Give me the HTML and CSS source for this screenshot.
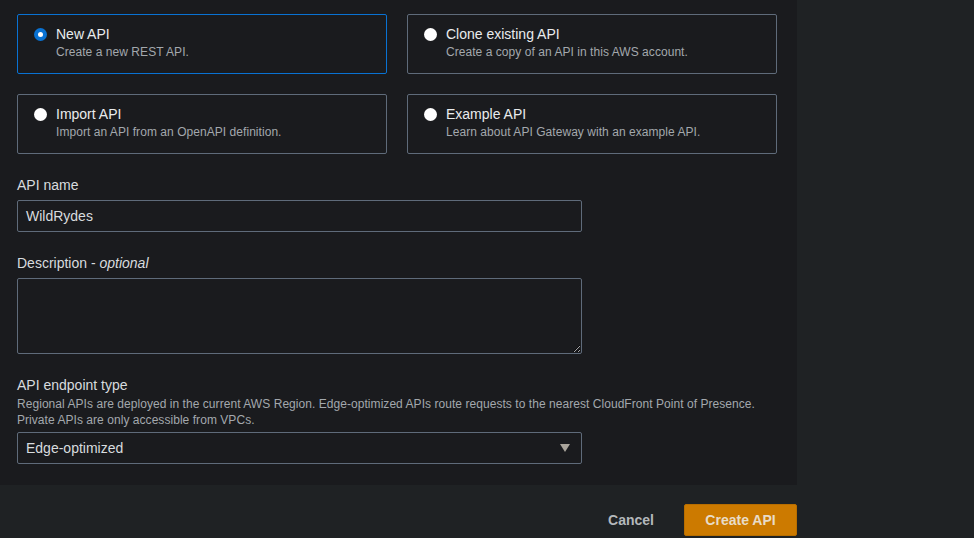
FILE: index.html
```html
<!DOCTYPE html>
<html lang="en">
<head>
<meta charset="utf-8">
<title>Create REST API</title>
<link rel="stylesheet" href="styles.css">
</head>
<body>
<main class="page">
  <section class="panel">
    <div class="tiles">
      <label class="tile tile-selected">
        <span class="radio radio-on"></span>
        <span class="tile-text">
          <span class="tile-title">New API</span>
          <span class="tile-desc">Create a new REST API.</span>
        </span>
      </label>
      <label class="tile">
        <span class="radio"></span>
        <span class="tile-text">
          <span class="tile-title">Clone existing API</span>
          <span class="tile-desc">Create a copy of an API in this AWS account.</span>
        </span>
      </label>
      <label class="tile">
        <span class="radio"></span>
        <span class="tile-text">
          <span class="tile-title">Import API</span>
          <span class="tile-desc">Import an API from an OpenAPI definition.</span>
        </span>
      </label>
      <label class="tile">
        <span class="radio"></span>
        <span class="tile-text">
          <span class="tile-title">Example API</span>
          <span class="tile-desc">Learn about API Gateway with an example API.</span>
        </span>
      </label>
    </div>

    <div class="field">
      <div class="field-label">API name</div>
      <div class="input">WildRydes</div>
    </div>

    <div class="field">
      <div class="field-label">Description - <em>optional</em></div>
      <textarea class="textarea"></textarea>
    </div>

    <div class="field">
      <div class="field-label">API endpoint type</div>
      <div class="field-desc">Regional APIs are deployed in the current AWS Region. Edge-optimized APIs route requests to the nearest CloudFront Point of Presence.<br>Private APIs are only accessible from VPCs.</div>
      <div class="select">
        <span>Edge-optimized</span>
        <svg class="caret" width="10" height="8" viewBox="0 0 10 8"><path d="M0 0 H10 L5 8 Z" fill="#a9a49b"/></svg>
      </div>
    </div>
  </section>

  <footer class="actions">
    <button class="btn-link">Cancel</button>
    <button class="btn-primary">Create API</button>
  </footer>
</main>
</body>
</html>
```

FILE: styles.css
```css
* { box-sizing: border-box; }

html, body {
  margin: 0;
  background: #1f2224;
  font-family: "Liberation Sans", Arial, sans-serif;
  color: #d5dbdb;
}

.page {
  width: 797px;
}

.panel {
  background: #1a1b1e;
  padding: 14px 17px 21px;
}

.tiles {
  display: grid;
  grid-template-columns: 370px 370px;
  grid-auto-rows: 60px;
  gap: 20px;
}

.tile {
  display: flex;
  align-items: flex-start;
  gap: 9px;
  border: 1px solid #5f6b7a;
  border-radius: 2px;
  padding: 13px 15px 0 16px;
}

.tile-selected {
  border-color: #0972d3;
}

.radio {
  flex: none;
  width: 13px;
  height: 13px;
  border-radius: 50%;
  background: #ffffff;
}

.radio-on {
  background: #0972d3;
  position: relative;
}

.radio-on::after {
  content: "";
  position: absolute;
  left: 4px;
  top: 4px;
  width: 5px;
  height: 5px;
  border-radius: 50%;
  background: #ffffff;
}

.tile-text {
  display: flex;
  flex-direction: column;
  margin-top: -4px;
}

.tile-title {
  font-size: 14px;
  line-height: 20px;
  color: #e9ebed;
}

.tile-desc {
  font-size: 12px;
  line-height: 16px;
  color: #a3a8ad;
  letter-spacing: 0.05px;
}

.field {
  margin-top: 21px;
}

.field-label {
  font-size: 14px;
  line-height: 20px;
  color: #d8dcdf;
}

.field-label em {
  font-style: italic;
}

.field-desc {
  font-size: 12px;
  line-height: 16px;
  color: #a3a8ad;
  margin-top: 1px;
  letter-spacing: 0.05px;
}

.input {
  margin-top: 5px;
  width: 565px;
  height: 32px;
  border: 1px solid #5f6b7a;
  border-radius: 2px;
  padding: 0 8px;
  font-size: 14px;
  line-height: 30px;
  color: #d8dcdf;
}

.textarea {
  display: block;
  margin-top: 5px;
  width: 565px;
  height: 76px;
  border: 1px solid #5f6b7a;
  border-radius: 2px;
  background: transparent;
  color: #d8dcdf;
  color-scheme: dark;
  font: inherit;
}

.select {
  margin-top: 4px;
  width: 565px;
  height: 32px;
  border: 1px solid #5f6b7a;
  border-radius: 2px;
  padding: 0 11px 0 8px;
  display: flex;
  align-items: center;
  justify-content: space-between;
  font-size: 14px;
  color: #d8dcdf;
}

.caret {
  display: block;
}

.actions {
  display: flex;
  justify-content: flex-end;
  align-items: center;
  gap: 14px;
  margin-top: 19px;
}

.btn-link {
  background: none;
  border: none;
  padding: 0 16px;
  height: 32px;
  font-family: inherit;
  font-size: 14px;
  font-weight: bold;
  color: #b4b8bb;
}

.btn-primary {
  width: 113px;
  height: 32px;
  background: #cc7a00;
  border: 1px solid #b86e00;
  border-radius: 2px;
  font-family: inherit;
  font-size: 14px;
  font-weight: bold;
  color: #e8dcc8;
}
```
